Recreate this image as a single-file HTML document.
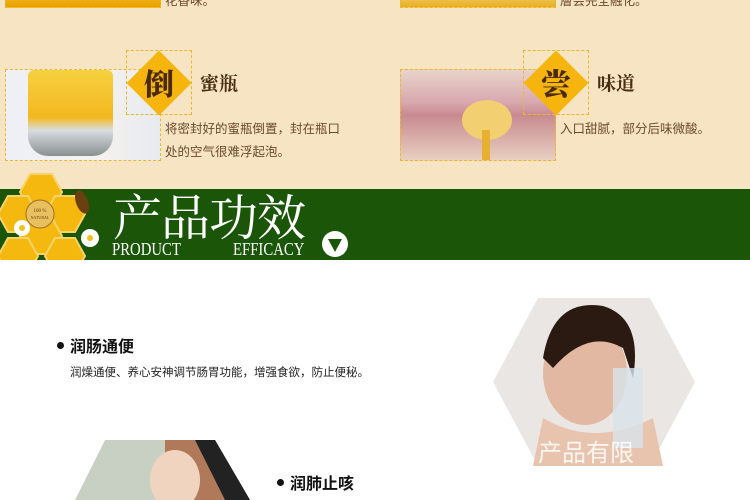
<!DOCTYPE html>
<html><head><meta charset="utf-8"><style>
*{margin:0;padding:0;box-sizing:border-box}
body{width:750px;height:500px;overflow:hidden;position:relative;background:#fff;font-family:"Liberation Sans","Noto Sans CJK SC",sans-serif}
.a{position:absolute}
.top{left:0;top:0;width:750px;height:189px;background:#f7e4c2}
.box{border:1px dashed #f0b62a}
.dsq{border:1px dashed #f0b62a;width:66px;height:65px}
.dia{width:46px;height:46px;background:#f5b50d;transform:rotate(45deg)}
.dl{font-family:"Noto Serif CJK SC",serif;font-weight:900;font-size:30px;color:#4a2a0a;width:66px;text-align:center}
.ttl{font-family:"Noto Serif CJK SC",serif;font-weight:700;font-size:19px;color:#4a2e12}
.tx{font-size:12.5px;color:#6a4a2c;line-height:23px}
.green{left:0;top:189px;width:750px;height:71px;background:#1b5608}
.en{font-family:'Liberation Serif',serif;font-size:18px;color:#fff;transform:scaleX(.82);transform-origin:0 0;line-height:18px}
</style></head><body>
<div class="a top"></div>
<div class="a box" style="left:5px;top:-10px;width:156px;height:18px;background:linear-gradient(#f5c030,#e8a000)"></div>
<div class="a tx" style="left:165px;top:-10px">花香味。</div>
<div class="a box" style="left:400px;top:-10px;width:156px;height:18px;background:linear-gradient(#f2d080,#e8b020)"></div>
<div class="a tx" style="left:560px;top:-10px">層会完全融化。</div>

<div class="a box" style="left:5px;top:69px;width:156px;height:92px;background:linear-gradient(90deg,#eef0f6,#f4f2ee 60%,#e8eaf0)"></div>
<div class="a" style="left:28px;top:70px;width:85px;height:86px;border-radius:6px 6px 20px 20px;background:linear-gradient(#f7d040,#f2b820 55%,#d8dde0 70%,#8a9090)"></div>
<div class="a dsq" style="left:126px;top:50px"></div>
<div class="a dia" style="left:136px;top:60px"></div>
<div class="a dl" style="left:126px;top:60px">倒</div>
<div class="a ttl" style="left:200px;top:69px">蜜瓶</div>
<div class="a tx" style="left:165px;top:118px">将密封好的蜜瓶倒置，封在瓶口<br>处的空气很难浮起泡。</div>

<div class="a box" style="left:400px;top:69px;width:156px;height:92px;background:linear-gradient(#e8d4c8,#d8aab0 35%,#c88a90 50%,#e8d0c0)"></div>
<div class="a" style="left:462px;top:100px;width:50px;height:40px;border-radius:50%;background:#f2cf70"></div>
<div class="a" style="left:482px;top:130px;width:8px;height:30px;background:#e8b030"></div>
<div class="a dsq" style="left:523px;top:50px"></div>
<div class="a dia" style="left:533px;top:60px"></div>
<div class="a dl" style="left:523px;top:60px">尝</div>
<div class="a ttl" style="left:597px;top:69px">味道</div>
<div class="a tx" style="left:560px;top:118px">入口甜腻，部分后味微酸。</div>

<div class="a green"></div>
<svg class="a" style="left:0;top:166px" width="110" height="94" viewBox="0 0 110 94">
<g fill="#f5b80f" stroke="#f7d46a" stroke-width="2">
<polygon points="30,8 52,8 62,26 52,44 30,44 20,26"/>
<polygon points="8,30 28,30 38,48 28,66 8,66 -2,48"/>
<polygon points="55,30 75,30 85,48 75,66 55,66 45,48"/>
<polygon points="30,52 52,52 62,70 52,88 30,88 20,70"/>
<polygon points="8,72 28,72 38,90 28,108 8,108 -2,90"/>
<polygon points="55,72 75,72 85,90 75,108 55,108 45,90"/>
</g>
<circle cx="40" cy="48" r="14" fill="#e8c060" stroke="#a07020"/>
<text x="40" y="46" font-size="5" text-anchor="middle" fill="#6a3a00" font-family="Liberation Serif">100 %</text>
<text x="40" y="53" font-size="4" text-anchor="middle" fill="#6a3a00" font-family="Liberation Serif">NATURAL</text>
<circle cx="22" cy="62" r="8" fill="#fff"/><circle cx="22" cy="62" r="3" fill="#f0c020"/>
<circle cx="90" cy="72" r="9" fill="#fff"/><circle cx="90" cy="72" r="3" fill="#f0c020"/>
<ellipse cx="82" cy="36" rx="6" ry="12" fill="#6a4010" transform="rotate(-20 82 36)"/>
</svg>
<div class="a" style="left:113px;top:186px;font-family:'Noto Serif CJK SC',serif;font-size:49px;color:#fff;letter-spacing:-1px;line-height:58px">产品功效</div>
<div class="a en" style="left:112px;top:240px">PRODUCT</div>
<div class="a en" style="left:233px;top:240px">EFFICACY</div>
<svg class="a" style="left:321px;top:230px" width="28" height="28"><circle cx="14" cy="14" r="13" fill="#fff"/><polygon points="7,9 21,9 14,22" fill="#1b5608"/></svg>

<div class="a" style="left:57px;top:342px;width:7px;height:7px;border-radius:50%;background:#111"></div>
<div class="a" style="left:70px;top:333px;font-size:16px;font-weight:bold;color:#111">润肠通便</div>
<div class="a" style="left:70px;top:364px;font-size:11.5px;color:#222">润燥通便、养心安神调节肠胃功能，增强食欲，防止便秘。</div>
<svg class="a" style="left:493px;top:298px" width="202" height="168">
<polygon points="45,0 157,0 202,84 157,168 45,168 0,84" fill="#eae6e4"/>
<ellipse cx="92" cy="75" rx="42" ry="52" fill="#e2b8a2"/>
<path d="M50,60 Q60,0 110,8 Q150,20 140,80 L130,50 Q95,30 60,70 Z" fill="#2a1a12"/>
<path d="M50,120 Q100,150 160,120 L170,168 L40,168 Z" fill="#e8c4ae"/>
<rect x="120" y="70" width="30" height="80" fill="#d8e4ea" opacity=".8"/>
<text x="45" y="163" font-size="24" fill="#fff" opacity=".85" font-family="Noto Sans CJK SC">产品有限</text>
</svg>
<svg class="a" style="left:75px;top:440px" width="175" height="60">
<polygon points="30,0 140,0 175,60 0,60" fill="#c8d0c4"/>
<polygon points="90,0 140,0 175,60 90,60" fill="#b07a5a"/>
<polygon points="120,0 140,0 175,60 150,60" fill="#222"/>
<ellipse cx="100" cy="40" rx="25" ry="30" fill="#f0d4c0"/>
</svg>
<div class="a" style="left:277px;top:479px;width:7px;height:7px;border-radius:50%;background:#111"></div>
<div class="a" style="left:290px;top:470px;font-size:16px;font-weight:bold;color:#111">润肺止咳</div>
</body></html>
